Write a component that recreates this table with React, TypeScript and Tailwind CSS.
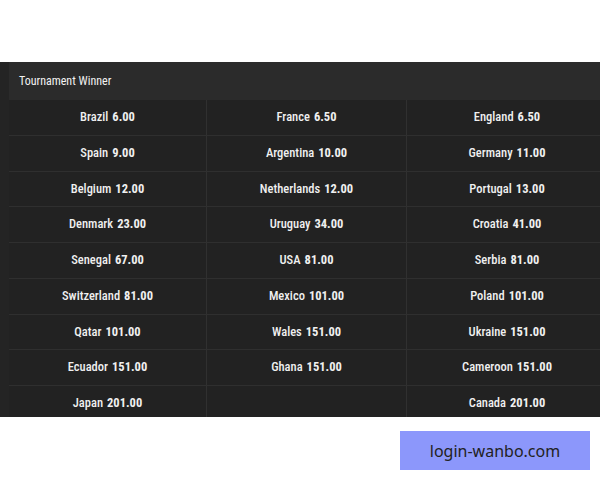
const odds: [string, string][] = [
  ["Brazil", "6.00"],
  ["France", "6.50"],
  ["England", "6.50"],
  ["Spain", "9.00"],
  ["Argentina", "10.00"],
  ["Germany", "11.00"],
  ["Belgium", "12.00"],
  ["Netherlands", "12.00"],
  ["Portugal", "13.00"],
  ["Denmark", "23.00"],
  ["Uruguay", "34.00"],
  ["Croatia", "41.00"],
  ["Senegal", "67.00"],
  ["USA", "81.00"],
  ["Serbia", "81.00"],
  ["Switzerland", "81.00"],
  ["Mexico", "101.00"],
  ["Poland", "101.00"],
  ["Qatar", "101.00"],
  ["Wales", "151.00"],
  ["Ukraine", "151.00"],
  ["Ecuador", "151.00"],
  ["Ghana", "151.00"],
  ["Cameroon", "151.00"],
  ["Japan", "201.00"],
  ["", ""],
  ["Canada", "201.00"],
];

export default function App() {
  return (
    <div
      className="w-[600px] h-[480px] bg-white overflow-hidden"
      style={{ fontFamily: '"Roboto Condensed", "Liberation Sans Narrow", Roboto, sans-serif' }}
    >
      <div className="h-[62px]" />
      <div className="flex h-[355px] overflow-hidden bg-[#232323]">
        <div className="w-[9px] shrink-0 bg-[#242424]" />
        <div className="w-[600px] shrink-0">
          <div className="h-[38px] flex items-center px-[10px] bg-[#2b2b2b] text-[12px] text-[#f2f2f2]">
            Tournament Winner
          </div>
          <div className="grid grid-cols-[198px_200px_200px]">
            {odds.map(([team, price], i) => (
              <div
                key={i}
                className={
                  "h-[35.75px] flex items-center justify-center gap-[4px] border-b border-[#2f2f2f] bg-[#222222] text-[12.5px] text-[#f0f0f0] " +
                  (i % 3 !== 2 ? "border-r border-r-[#303030]" : "")
                }
              >
                {team && <span className="font-medium">{team}</span>}
                {price && <span className="font-bold">{price}</span>}
              </div>
            ))}
          </div>
        </div>
      </div>
      <div className="flex justify-end pr-[10px] pt-[14px]">
        <div
          className="w-[190px] h-[39px] flex items-center justify-center bg-[#8c97fb] text-[16px] text-[#222]"
          style={{ fontFamily: '"Noto Sans", sans-serif' }}
        >
          login-wanbo.com
        </div>
      </div>
    </div>
  );
}
